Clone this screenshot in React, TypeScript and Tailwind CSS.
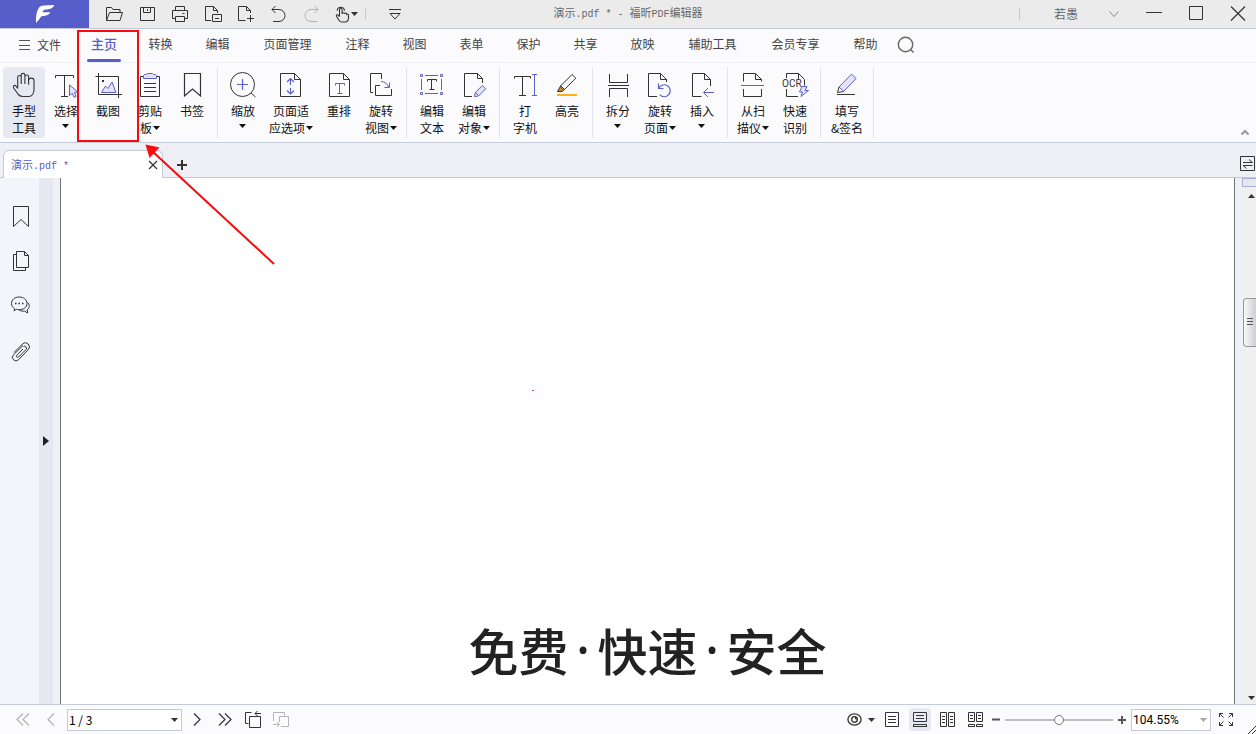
import React, { ReactNode } from "react";

const INK = "#333333";
const BLUE = "#5a61cc";
const TINT = "#e4e3fb";

function Caret({ className = "" }: { className?: string }) {
  return (
    <svg aria-hidden="true" className={`h-1 w-[7px] shrink-0 ${className}`} viewBox="0 0 7 4">
      <path d="M0 0h7L3.5 4z" fill="currentColor" />
    </svg>
  );
}

function Glyph({ size = 28, w, stroke = INK, children }: { size?: number; w?: number; stroke?: string; children: ReactNode }) {
  return (
    <svg
      aria-hidden="true"
      width={w ?? size}
      height={size}
      viewBox={`0 0 ${w ?? size} ${size}`}
      fill="none"
      stroke={stroke}
      strokeWidth="1"
      className="block shrink-0 overflow-visible"
    >
      {children}
    </svg>
  );
}

type Tool = {
  label: string;
  lines: string[];
  icon: ReactNode;
  menu?: boolean;
  active?: boolean;
  width?: string;
};

const toolGroups: Tool[][] = [
  [
    {
      label: "手型工具",
      lines: ["手型", "工具"],
      active: true,
      icon: (
        <path
          strokeWidth="1.1"
          d="M7.700 17.500V6.300a1.700 1.700 0 0 1 3.500 0V13V4.200a1.800 1.800 0 0 1 3.700 0V13V5.800a1.800 1.800 0 0 1 3.700 0v8V9.800a2.400 2.400 0 0 1 5.400 0v8.700c0 4-2 7-5.200 7h-6.300c-2.400 0-3.800-1-4.800-3L3.600 17c-1-2.200 1-3.500 2.500-1.900l1.600 2.400"
        />
      ),
    },
    {
      label: "选择",
      lines: ["选择"],
      menu: true,
      icon: (
        <>
          <path d="M3.500 7V4.500h18V7M12.500 4.500v21M9 25.500h7" />
          <path d="M17.500 14v10.500l2.800-2.200 1.700 4 2.200-1-1.700-3.800 3.300-.5z" fill={TINT} stroke={BLUE} />
        </>
      ),
    },
    {
      label: "截图",
      lines: ["截图"],
      icon: (
        <>
          <path d="M1.500 5.500h23V27M4.500 2v21.500H28" />
          <path d="M7.500 21.500l4-6.500 2.500 2.500 4-6.500 4 10.500z" fill={TINT} stroke={BLUE} />
          <path d="M8 9h2v2H8z" fill={INK} stroke="none" />
        </>
      ),
    },
    {
      label: "剪贴板",
      lines: ["剪贴", "板"],
      menu: true,
      icon: (
        <>
          <path d="M7.500 5.500h-3v20h19v-20h-3M8 12.500h12M8 16.500h12M8 20.500h12" />
          <path d="M8.500 3.500h2l1-1h5l1 1h2l1 1v3h-13v-3z" fill={TINT} stroke={BLUE} />
        </>
      ),
    },
    {
      label: "书签",
      lines: ["书签"],
      icon: <path d="M6.500 25V2.500h16V25l-8-7z" strokeWidth="1.200" />,
    },
  ],
  [
    {
      label: "缩放",
      lines: ["缩放"],
      menu: true,
      icon: (
        <>
          <circle cx="13.500" cy="13.500" r="12" />
          <path d="M22 22l4.500 4" />
          <path d="M8 13.500h11M13.500 8v11" stroke={BLUE} strokeWidth="1.200" />
        </>
      ),
    },
    {
      label: "页面适应选项",
      lines: ["页面适", "应选项"],
      menu: true,
      width: "w-[54px]",
      icon: (
        <>
          <path d="M3.500 2.500h14l6 6v17h-20zM17.500 2.500v6h6" />
          <path
            d="M13.500 8v6M10 11l3.500-3.500L17 11M13.500 17v6M10 19.500l3.500 3.500 3.500-3.500"
            stroke={BLUE}
            strokeWidth="1.200"
          />
        </>
      ),
    },
    {
      label: "重排",
      lines: ["重排"],
      icon: (
        <>
          <path d="M4.500 2.500h14l6 6v17h-20zM18.500 2.500v6h6" />
          <path d="M10.500 14.500v-2h9v2M14.500 12.500v10M12.500 22.500h5" stroke={BLUE} />
        </>
      ),
    },
    {
      label: "旋转视图",
      lines: ["旋转", "视图"],
      menu: true,
      icon: (
        <>
          <path d="M6 21.500H3.500v-19h11V8M13 14.500H8.500v10h16V18" />
          <path d="M14 10.500c4 0 6.500 2.500 7.500 5.500M22.500 11.500v5h-5" stroke={BLUE} />
        </>
      ),
    },
  ],
  [
    {
      label: "编辑文本",
      lines: ["编辑", "文本"],
      icon: (
        <>
          <path
            d="M2.500 3.500h2v2h-2zM22.500 3.500h2v2h-2zM2.500 21.500h2v2h-2zM22.500 21.500h2v2h-2zM7 4.500h13M7 22.500h13M3.500 8v11M23.500 8v11"
            stroke={BLUE}
          />
          <path d="M9.500 10.500v-2h9v2M13.500 8.500v10M11.500 18.500h5" />
        </>
      ),
    },
    {
      label: "编辑对象",
      lines: ["编辑", "对象"],
      menu: true,
      icon: (
        <>
          <path d="M12 25.500H4.500v-23h13l5 5V12M17.500 2.500v5h5" />
          <path d="M14.500 25.500l.8-4 7-7 3.400 3.300-7.200 7.200zM15.500 21.500l3 3" fill={TINT} stroke={BLUE} />
        </>
      ),
    },
  ],
  [
    {
      label: "打字机",
      lines: ["打", "字机"],
      icon: (
        <>
          <path d="M3.500 7.500v-2h16v2M11.500 5.500v19M8 24.500h7" />
          <path d="M21 3.500h5M21 24.500h5M23.500 3.500v21" stroke={BLUE} />
        </>
      ),
    },
    {
      label: "高亮",
      lines: ["高亮"],
      icon: (
        <>
          <path d="M19 3.500l3.800 3.600L11.500 18.500 7.600 15z" />
          <path d="M7.600 15l3.900 3.500-2.500 2H4.500z" fill="#c98a2b" />
          <path d="M4 24h20" stroke="#ffb014" strokeWidth="2" />
        </>
      ),
    },
  ],
  [
    {
      label: "拆分",
      lines: ["拆分"],
      menu: true,
      icon: <path d="M5.500 3v8.500h18V3M4 14.500h21M5.500 26v-8.500h18V26" />,
    },
    {
      label: "旋转页面",
      lines: ["旋转", "页面"],
      menu: true,
      icon: (
        <>
          <path d="M11 25.500H2.500v-23h12l6 6V11M14.500 2.500v6h6" />
          <path d="M12.500 12.500v5h5M12.800 17.200a6 6 0 1 1 .9 6.500" stroke={BLUE} strokeWidth="1.200" />
        </>
      ),
    },
    {
      label: "插入",
      lines: ["插入"],
      menu: true,
      icon: (
        <>
          <path d="M13.500 25.500h-9v-23h12l6 6V15M16.500 2.500v6h6" />
          <path d="M26 21.500H15.500M20 17l-4.500 4.500L20 26" stroke={BLUE} />
        </>
      ),
    },
  ],
  [
    {
      label: "从扫描仪",
      lines: ["从扫", "描仪"],
      menu: true,
      icon: (
        <>
          <path d="M4.500 10.500v-8h12l6 6v2M16.500 2.500v6h6M4.500 18v7.500h18V18" />
          <path d="M2 14.500h23" stroke={BLUE} />
        </>
      ),
    },
    {
      label: "快速识别",
      lines: ["快速", "识别"],
      icon: (
        <>
          <path d="M5.500 7V2.500h12l6 6v6M17.500 2.500v6M5.500 18v7.500H17" />
          <text x="1" y="16" fill={INK} stroke="none" fontSize="10" fontFamily="Roboto, sans-serif">
            OCR
          </text>
          <path d="M21 15.500h5l-2 4h3.500l-7.500 6 1.500-4.500H18.500z" fill={TINT} stroke={BLUE} />
        </>
      ),
    },
  ],
  [
    {
      label: "填写&签名",
      lines: ["填写", "&签名"],
      width: "w-11",
      icon: (
        <>
          <path d="M6 16l-1.500 5.500 6-1M4 23.500h18" />
          <path d="M18.500 3.200l4.600 4.300L10.800 20.200 6 16z" fill={TINT} stroke={BLUE} />
        </>
      ),
    },
  ],
];

const menus = ["转换", "编辑", "页面管理", "注释", "视图", "表单", "保护", "共享", "放映", "辅助工具", "会员专享", "帮助"];

const quickActions: { label: string; icon: ReactNode; muted?: boolean }[] = [
  { label: "打开", icon: <path d="M2.500 16.500v-13h5l1.500 2h7v3M2.500 16.500l3-8h13l-2.500 8z" /> },
  { label: "保存", icon: <path d="M3.500 3.500h14v13h-14zM6.500 3.500v5h7v-5M10.500 5v2" /> },
  {
    label: "打印",
    icon: <path d="M5.500 6.500v-4h9v4M5.500 14.500h-3v-8h15v8h-3M5.500 12.500h9v5h-9zM12.500 9.500h2" />,
  },
  { label: "另存为", icon: <path d="M8 16.500H2.500v-14h8l4 4V9M10.500 2.500v4h4M9.500 10.500h9v7h-9zM12 14.500h4" /> },
  { label: "新建", icon: <path d="M9.500 16.500h-7v-14h8l4 4V9M10.500 2.500v4h4M14.500 11v7M11 14.500h7" /> },
  { label: "撤销", icon: <path d="M6.500 2L3 5.500 6.500 9M3 5.500h7a6 6 0 0 1 0 12H4" /> },
  { label: "重做", muted: true, icon: <path d="M12.500 2L16 5.500 12.500 9M16 5.500H9a6 6 0 0 0 0 12h6" /> },
];

function TitleBar() {
  return (
    <header className="grid h-[29px] shrink-0 grid-cols-[1fr_auto_1fr] border-b border-[#c5cadb] bg-[#ebebeb]">
      <div className="flex">
        <div className="flex w-[89px] items-center justify-center bg-[#575ec9]">
          <svg aria-label="福昕" width="20" height="20" viewBox="102 12 60 60">
            <path
              fill="#fff"
              d="M122 17Q140 15 160 15Q155 26 142 28L130 29Q124 32 124 37L148 37Q144 46 132 47L121 49Q114 60 105 69Q104 45 110 30Q114 19 122 17"
            />
          </svg>
        </div>
        <div className="flex pl-[9px]">
          {quickActions.map((a) => (
            <button key={a.label} aria-label={a.label} className="flex w-[33px] items-center justify-center">
              <Glyph size={20} w={21} stroke={a.muted ? "#b4b4b4" : INK}>
                {a.icon}
              </Glyph>
            </button>
          ))}
          <button aria-label="触摸模式" className="flex w-8 items-center pl-[6px] text-[#333333]">
            <Glyph size={20} w={16}>
              <path
                strokeWidth="1.100"
                d="M4.500 12.500V5.500a1.300 1.300 0 0 1 2.600 0V10a1.200 1.200 0 0 1 2.400 0a1.200 1.200 0 0 1 2.400 .4a1 1 0 0 1 1.600 .8v2.300c0 3-1.500 4.500-3.500 4.500H7c-1.500 0-2.300-.6-3-1.800l-2.500-4c-.6-1.300.7-2 1.600-1l1.400 1.500M2.200 6.800a3.600 3.600 0 1 1 7.200 0"
              />
            </Glyph>
            <Caret />
          </button>
          <span className="my-2 ml-1 w-px bg-[#c9c9cc]" />
          <button aria-label="自定义快速访问工具栏" className="ml-[15px] flex w-7 items-center justify-center">
            <Glyph size={20} w={14}>
              <path d="M1 5.500h12M2 9.500h10L7 15z" />
            </Glyph>
          </button>
        </div>
      </div>
      <h1 className="flex items-center whitespace-pre pt-px font-['Liberation_Mono','Noto_Sans_CJK_SC',monospace] text-[11px] text-[#666666]">
        <span>演示</span>
        <span className="text-[10px]">.pdf * - </span>
        <span>福昕</span>
        <span className="text-[10px]">PDF</span>
        <span>编辑器</span>
      </h1>
      <div className="flex items-center justify-end gap-6 pr-[9px]">
        <span className="h-[13px] w-px bg-[#c9c9cc]" />
        <button className="ml-[10px] flex items-center gap-[27px] text-xs text-[#666666]">
          若愚
          <Glyph size={18} w={16} stroke="#888888">
            <path d="M4.500 6.500l4.500 5 4.500-5" />
          </Glyph>
        </button>
        <button aria-label="最小化">
          <Glyph size={18}>
            <path d="M1 7.500h16" />
          </Glyph>
        </button>
        <button aria-label="最大化">
          <Glyph size={18}>
            <path d="M2.500 1.500h13v13h-13z" />
          </Glyph>
        </button>
        <button aria-label="关闭">
          <Glyph size={18}>
            <path d="M2 1.500l14 14M16 1.500l-14 14" strokeWidth="1.200" />
          </Glyph>
        </button>
      </div>
    </header>
  );
}

function MenuBar() {
  return (
    <nav className="flex h-[34px] shrink-0 border-b border-[#f0f1f5] text-xs text-[#444444]">
      <button className="flex w-[76px] items-center gap-[6px] pb-[2px] pl-[19px]">
        <Glyph size={12} stroke="#555555">
          <path d="M0 1.500h11M0 6.500h11M0 10.500h11" />
        </Glyph>
        文件
      </button>
      <button className="flex w-14 flex-col items-center text-[13px] font-medium text-[#575ec9]">
        <span className="flex h-[30px] items-center">主页</span>
        <span className="h-[3px] w-[34px] rounded-full bg-[#575ec9]" />
      </button>
      {menus.map((m) => (
        <button key={m} className={`pb-[3px] ${m.length > 2 ? "w-[83px]" : "w-[57px]"}`}>
          {m}
        </button>
      ))}
      <button aria-label="搜索" className="ml-[3px] flex items-center">
        <Glyph size={18} stroke="#666666">
          <circle cx="8.500" cy="7.500" r="7.200" strokeWidth="1.400" />
          <path d="M13.500 12.500l3 3" strokeWidth="1.400" />
        </Glyph>
      </button>
    </nav>
  );
}

function ToolButton({ tool }: { tool: Tool }) {
  const last = tool.lines.length - 1;
  return (
    <button
      aria-label={tool.label}
      className={`flex h-[70px] flex-col items-center pt-1 ${tool.width ?? "w-[42px]"}`}
    >
      <Glyph>{tool.icon}</Glyph>
      <span className="mt-[3px] flex flex-col items-center">
        {tool.lines.map((line, i) => (
          <span key={line} className="flex h-[17px] items-center gap-px whitespace-nowrap">
            {line}
            {tool.menu && last > 0 && i === last && <Caret />}
          </span>
        ))}
        {tool.menu && last === 0 && <Caret className="mt-[5px]" />}
      </span>
    </button>
  );
}

function Ribbon() {
  return (
    <section aria-label="工具栏" className="flex h-20 shrink-0 border-b border-[#c5cadb] pl-[3px] pt-1 text-xs text-[#111111]">
      {toolGroups.map((group, g) => (
        <div key={g} className="mr-1 flex h-[71px] border-r border-[#e2e4ea] pr-1">
          {group.map((tool) => (
            <div key={tool.label} className={tool.active ? "rounded-sm bg-[#e6e9f1]" : ""}>
              <ToolButton tool={tool} />
            </div>
          ))}
        </div>
      ))}
      <button aria-label="收起功能区" className="ml-auto mr-[6px] self-end pb-1">
        <Glyph size={10} stroke="#999999">
          <path d="M1.500 6.500L5 3l3.500 3.500" strokeWidth="2" />
        </Glyph>
      </button>
    </section>
  );
}

function TabStrip() {
  return (
    <div className="flex h-[35px] shrink-0 bg-[#eff0f5]">
      <span className="w-[3px] border-b border-[#c5cadb]" />
      <div className="mt-[7px] flex w-40 items-center rounded-t-md border border-b-0 border-[#c5cadb] bg-white pl-[7px] pr-1 pt-1 font-['Liberation_Mono','Noto_Sans_CJK_SC',monospace] text-[11px] text-[#575ec9]">
        <span>演示</span>
        <span className="whitespace-pre text-[10px]">.pdf *</span>
        <button aria-label="关闭标签" className="ml-auto pb-1">
          <Glyph size={10}>
            <path d="M1 1l8 8M9 1l-8 8" strokeWidth="1.200" />
          </Glyph>
        </button>
      </div>
      <div className="flex flex-1 items-center justify-between border-b border-[#c5cadb] pl-[14px] pt-[10px]">
        <button aria-label="新建标签">
          <Glyph size={10}>
            <path d="M0 5h10M5 0v10" strokeWidth="2" />
          </Glyph>
        </button>
        <button aria-label="切换视图" className="pb-[2px]">
          <Glyph size={16}>
            <path d="M.5 .5h14v14H.5zM3 6.500h9.500L9 3.500M12.500 9.500H3l3.500 3" />
          </Glyph>
        </button>
      </div>
    </div>
  );
}

const panels: { label: string; icon: ReactNode }[] = [
  { label: "书签面板", icon: <path d="M5.500 21.500V1.500h15v20l-7.500-7z" /> },
  {
    label: "页面面板",
    icon: <path d="M8.500 1.500h8l4 4v12h-12zM16.500 1.500v4h4M8.500 4.500h-3v16h12v-3" />,
  },
  {
    label: "注释面板",
    icon: (
      <>
        <path d="M6.500 13.700C4.500 12.300 3.500 10.500 3.500 8.500c0-3.800 3.300-6.500 7.700-6.500s7.800 2.700 7.800 6.500-3.400 6.200-7.800 6.200c-1 0-2-.1-2.800-.4l-2.300 1.500z" />
        <path d="M19.500 7.500c1.200 1 1.900 2.300 1.700 4-.1 1.200-.8 2.400-2 3.200l.5 3.300-3.200-1.900c-2 .2-4-.1-5.500-1.200" />
        <path d="M7 8.500h1.500M10.500 8.500h1.500M14 8.500h1.500" strokeWidth="1.600" />
      </>
    ),
  },
  {
    label: "附件面板",
    icon: (
      <path
        strokeWidth="1"
        d="M6 12.500L14.500 4a4 4 0 0 1 5.700 5.700L10.500 19.800a3.500 3.500 0 0 1-5-5l9.500-9.300M15.500 6.500a2 2 0 0 1 2.700 2.800L10.500 17c-1.200 1.100-2.800-.4-1.700-1.700l6.200-6.300"
      />
    ),
  },
];

function Workspace() {
  return (
    <main className="flex min-h-0 flex-1 bg-[#eff0f5]">
      <aside className="flex w-[39px] flex-col items-center bg-[#f4f5fa] pt-4">
        {panels.map((p) => (
          <button key={p.label} aria-label={p.label} className="flex h-[45px] items-center">
            <Glyph size={23}>{p.icon}</Glyph>
          </button>
        ))}
      </aside>
      <button aria-label="展开面板" className="mr-[7px] flex w-[14px] items-center justify-center bg-[#e5e8f1] text-[#222222]">
        <svg aria-hidden="true" width="6" height="10" viewBox="0 0 6 10">
          <path d="M0 0l6 5-6 5z" fill="currentColor" />
        </svg>
      </button>
      <article className="relative flex flex-1 items-end justify-center border-x border-[#73737b] bg-white pb-[30px]">
        <span className="absolute left-[471px] top-[212px] h-px w-[2px] bg-[#f04050]" />
        <h2 className="flex text-[50px] font-medium leading-[50px] text-[#222222]">
          免费<span className="w-[29px] text-center font-['Noto_Sans',sans-serif]">·</span>
          快速<span className="w-[29px] text-center font-['Noto_Sans',sans-serif]">·</span>安全
        </h2>
      </article>
      <div className="ml-[7px] flex w-[14px] flex-col items-end bg-[#f0f0f0] text-[#333333]">
        <span className="h-[9px] w-full border border-r-0 border-[#a9afd0] bg-[#e5e8f1]" />
        <svg aria-hidden="true" className="mr-px mt-[7px]" width="7" height="4" viewBox="0 0 7 4">
          <path d="M0 4h7L3.500 0z" fill="currentColor" />
        </svg>
        <span className="mt-[100px] flex h-[49px] w-[13px] flex-col items-center justify-center gap-[2px] rounded-l-sm border border-r-0 border-[#999999] bg-linear-to-r from-[#f8f8f8] to-[#cfcfd2] pb-[2px]">
          <span className="h-px w-[6px] bg-[#555555]" />
          <span className="h-px w-[6px] bg-[#555555]" />
          <span className="h-px w-[6px] bg-[#555555]" />
        </span>
        <Caret className="mb-1 mr-px mt-auto" />
      </div>
    </main>
  );
}

function StatusButton({ label, muted, active, children }: { label: string; muted?: boolean; active?: boolean; children: ReactNode }) {
  return (
    <button aria-label={label} className="flex w-7 items-center justify-center">
      <span className={`flex h-[23px] w-[22px] items-center justify-center rounded-sm ${active ? "bg-[#e6e9f1]" : ""}`}>
        <Glyph size={17} w={18} stroke={muted ? "#b4b4b8" : INK}>
          {children}
        </Glyph>
      </span>
    </button>
  );
}

function StatusBar() {
  return (
    <footer className="relative flex h-[30px] shrink-0 items-center justify-between border-t border-[#c5cadb] pl-[9px] pr-4 text-[#333333]">
      <div className="flex items-center">
        <StatusButton label="首页" muted>
          <path d="M9 2.500l-6 6 6 6M15 2.500l-6 6 6 6" strokeWidth="1.200" />
        </StatusButton>
        <StatusButton label="上一页" muted>
          <path d="M12 2.500l-6 6 6 6" strokeWidth="1.200" />
        </StatusButton>
        <div className="relative ml-[2px] mr-px flex items-center">
          <select
            aria-label="页码"
            defaultValue="1"
            className="h-[22px] w-[115px] appearance-none border border-[#c5cadb] bg-white pl-px font-['Noto_Sans_CJK_SC',sans-serif] text-xs text-black"
          >
            <option value="1">1 / 3</option>
            <option value="2">2 / 3</option>
            <option value="3">3 / 3</option>
          </select>
          <Caret className="pointer-events-none absolute right-1" />
        </div>
        <StatusButton label="下一页">
          <path d="M6 2.500l6 6-6 6" strokeWidth="1.200" />
        </StatusButton>
        <StatusButton label="末页">
          <path d="M3 2.500l6 6-6 6M9 2.500l6 6-6 6" strokeWidth="1.200" />
        </StatusButton>
        <StatusButton label="后退">
          <path d="M4.500 12.500h-3v-11h6M5.500 5.500h11v11h-11zM11 2.500h6M13.500 0L11 2.500 13.500 5" />
        </StatusButton>
        <StatusButton label="前进" muted>
          <path d="M1.500 10V1.500h11v3M7.500 11V5.500h9v10H9M1 13.500h6M5 11l2.500 2.500L5 16" />
        </StatusButton>
      </div>
      <div className="flex items-center">
        <button aria-label="阅读模式" className="mr-[3px] flex items-center gap-[6px]">
          <Glyph size={17} w={15}>
            <ellipse cx="7.500" cy="8.500" rx="6.600" ry="5.600" strokeWidth="1.300" />
            <circle cx="7.500" cy="8.500" r="2.800" strokeWidth="1.300" />
            <path d="M8.500 5.500v2.500H11" />
          </Glyph>
          <Caret />
        </button>
        <StatusButton label="单页">
          <path d="M2.500 1.500h13v14h-13zM5 5.500h8M5 8.500h8M5 11.500h8" />
        </StatusButton>
        <StatusButton label="连续" active>
          <path d="M2.500 1.500h13v9h-13zM5 4.500h8M5 7.500h8M2.500 16v-2.500h13V16M2 15.500h14" />
        </StatusButton>
        <StatusButton label="对开">
          <path d="M1.500 1.500h6v14h-6zM9.500 1.500h6v14h-6zM3 5.500h3M3 8.500h3M3 11.500h3M11 5.500h3M11 8.500h3M11 11.500h3" />
        </StatusButton>
        <StatusButton label="连续对开">
          <path d="M1.500 1.500h6v9h-6zM9.500 1.500h6v9h-6zM3 4.500h3M3 7.500h3M11 4.500h3M11 7.500h3M1.500 16v-2.500h6V16M9.500 16v-2.500h6V16M1 15.500h7M9 15.500h7" />
        </StatusButton>
        <button aria-label="缩小" className="flex w-[15px] items-center pl-[2px]">
          <Glyph size={9}>
            <path d="M0 4.500h8" strokeWidth="2" stroke="#555555" />
          </Glyph>
        </button>
        <input
          type="range"
          aria-label="缩放比例"
          min={0}
          max={100}
          defaultValue={50}
          className="h-[22px] w-[108px] appearance-none bg-transparent [&::-webkit-slider-runnable-track]:h-[2px] [&::-webkit-slider-runnable-track]:bg-[#bfbfc2] [&::-webkit-slider-thumb]:-mt-1 [&::-webkit-slider-thumb]:size-[10px] [&::-webkit-slider-thumb]:appearance-none [&::-webkit-slider-thumb]:rounded-full [&::-webkit-slider-thumb]:border [&::-webkit-slider-thumb]:border-[#777777] [&::-webkit-slider-thumb]:bg-white"
        />
        <button aria-label="放大" className="flex w-[18px] items-center justify-center">
          <Glyph size={8}>
            <path d="M0 4h8M4 0v8" strokeWidth="2" stroke="#555555" />
          </Glyph>
        </button>
        <div className="relative mr-px flex items-center">
          <select
            aria-label="显示比例"
            defaultValue="104.55%"
            className="h-[22px] w-20 appearance-none border border-[#c5cadb] bg-white pl-px pt-px font-['Roboto',sans-serif] text-xs text-black"
          >
            <option>104.55%</option>
            <option>100%</option>
          </select>
          <Caret className="pointer-events-none absolute right-1 text-[#a8a8a8]" />
        </div>
        <StatusButton label="全屏">
          <path
            d="M2.500 6V2.500H6M2.500 2.500l4 4M12 2.500h3.500V6M15.500 2.500l-4 4M2.500 11v3.500H6M2.500 14.500l4-4M15.500 11v3.500H12M15.500 14.500l-4-4"
          />
        </StatusButton>
      </div>
      <svg aria-hidden="true" className="absolute bottom-0 right-0" width="8" height="8" viewBox="0 0 8 8" stroke={INK}>
        <path d="M0 8l8-8M4 8l4-4" />
      </svg>
    </footer>
  );
}

export default function App() {
  return (
    <div className="relative flex h-screen flex-col overflow-hidden bg-[#fbfbfe] font-['Noto_Sans_CJK_SC',sans-serif]">
      <TitleBar />
      <MenuBar />
      <Ribbon />
      <TabStrip />
      <Workspace />
      <StatusBar />
      <svg
        aria-hidden="true"
        className="pointer-events-none absolute left-0 top-0"
        width="280"
        height="270"
        viewBox="0 0 280 270"
        fill="none"
        stroke="#fa0a0a"
        strokeWidth="2"
      >
        <path d="M78 31h60v110H78z" />
        <path d="M274 264L152 151" />
        <path d="M145.500 144.500l14 3-10 10.500z" fill="#fa0a0a" stroke="none" />
      </svg>
    </div>
  );
}
